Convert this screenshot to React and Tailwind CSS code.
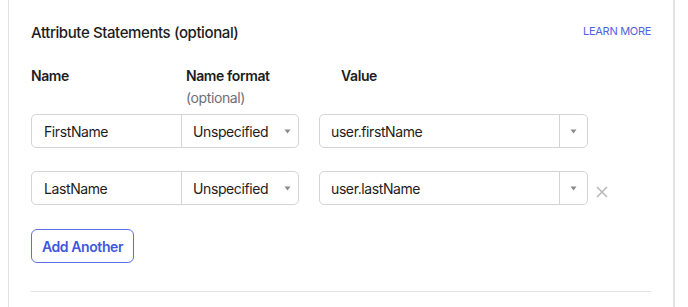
import { useState } from "react";

const rows = [
  { name: "FirstName", format: "Unspecified", value: "user.firstName", removable: false },
  { name: "LastName", format: "Unspecified", value: "user.lastName", removable: true },
];

function Caret() {
  return (
    <svg width="7" height="5" viewBox="0 0 7 5" className="shrink-0">
      <path d="M0.5 0.5 L6.5 0.5 L3.5 4.5 Z" fill="#8a8a90" />
    </svg>
  );
}

function AttributeRow({ row }) {
  return (
    <div className="flex items-center h-[34px]">
      {/* Name + format */}
      <div className="flex h-full w-[268px] rounded-[5px] border border-[#d4d4d8] bg-white">
        <div className="w-[150px] flex items-center pl-[12px] text-[14px] text-[#1d1d21] border-r border-[#d4d4d8]">
          {row.name}
        </div>
        <div className="flex-1 flex items-center justify-between pl-[11px] pr-[7px] text-[14px] text-[#1d1d21]">
          <span>{row.format}</span>
          <Caret />
        </div>
      </div>

      {/* Value */}
      <div className="ml-[20px] flex h-full w-[269px] rounded-[5px] border border-[#d4d4d8] bg-white">
        <div className="flex-1 flex items-center pl-[11px] text-[14px] text-[#1d1d21] border-r border-[#d4d4d8]">
          {row.value}
        </div>
        <div className="w-[27px] flex items-center justify-center">
          <Caret />
        </div>
      </div>

      {row.removable && (
        <button className="ml-[8px] mt-[7px] text-[#b8b8bc]">
          <svg width="12" height="12" viewBox="0 0 12 12">
            <path d="M1 1 L11 11 M11 1 L1 11" stroke="currentColor" strokeWidth="1.6" />
          </svg>
        </button>
      )}
    </div>
  );
}

export default function App() {
  const [items] = useState(rows);

  return (
    <div
      className="w-[688px] h-[307px] bg-white overflow-hidden tracking-[-0.4px]"
      style={{ fontFamily: "Inter, 'Noto Sans', sans-serif" }}
    >
      <div className="ml-[8px] w-[667px] h-full border-l border-r-2 border-[#e3e3e6] px-[22px]">
        {/* Header */}
        <div className="flex items-start justify-between pt-[23px]">
          <h2 className="text-[15px] leading-[20px] font-medium text-[#1d1d21]">
            Attribute Statements (optional)
          </h2>
          <a className="text-[11px] leading-[14px] text-[#4f63e0] mt-[1px] tracking-[-0.3px]">LEARN MORE</a>
        </div>

        {/* Column labels */}
        <div className="flex mt-[23px] text-[14px] leading-[20px] font-semibold text-[#1d1d21]">
          <div className="w-[155px]">Name</div>
          <div className="w-[155px]">
            <div>Name format</div>
            <div className="font-normal text-[#6e6e78] mt-[2px]">(optional)</div>
          </div>
          <div>Value</div>
        </div>

        {/* Rows */}
        <div className="mt-[6px] flex flex-col gap-[23px]">
          {items.map((row) => (
            <AttributeRow key={row.name} row={row} />
          ))}
        </div>

        <button className="mt-[24px] h-[34px] w-[103px] rounded-[6px] border border-[#5c6fe6] text-[14px] font-semibold text-[#4257dc]">
          Add Another
        </button>

        <div className="mt-[28px] border-t border-[#e3e3e6]" />
      </div>
    </div>
  );
}
